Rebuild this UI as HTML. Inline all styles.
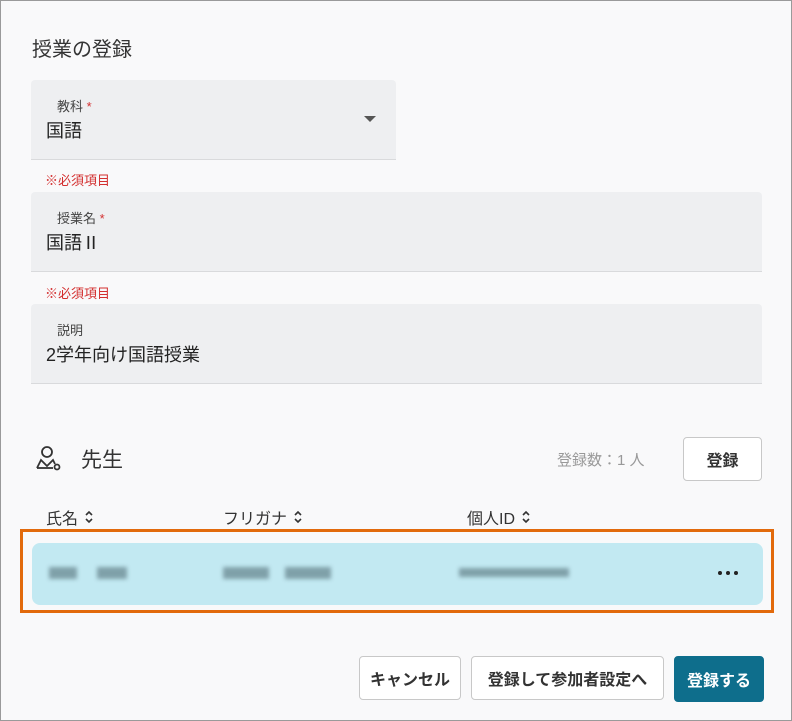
<!DOCTYPE html><html><head><meta charset="utf-8"><style>
body{margin:0;width:792px;height:721px;overflow:hidden;background:#fff;font-family:"Liberation Sans","Noto Sans CJK JP",sans-serif;}
.d{position:absolute;left:0;top:0;width:790px;height:719px;border:1px solid #9a9a9a;background:#f9f9fa;}
.a{position:absolute;}
.f{position:absolute;background:#eeeff1;border-bottom:1px solid #d9dadc;border-radius:4px 4px 0 0;}
.lb{position:absolute;left:26px;top:16px;font-size:13px;color:#444;}
.v{position:absolute;left:15px;font-size:18px;color:#222;}
.req{color:#d32f2f;font-size:13px;}
.btn{position:absolute;border:1px solid #c8c8c8;border-radius:4px;background:#fff;font-size:16px;color:#333;display:flex;align-items:center;justify-content:center;font-weight:bold;}
.th{position:absolute;top:504px;font-size:16px;color:#333;display:flex;align-items:center;gap:6px}
.blur{position:absolute;height:12px;background:#6f8e97;filter:blur(2px);opacity:.8}
</style></head><body><div class="d">
<div class="a" style="left:31px;top:32px;font-size:20px;color:#333">授業の登録</div>
<div class="f" style="left:30px;top:79px;width:365px;height:79px"><div class="lb">教科 <span class="req">*</span></div><div class="v" style="top:37px">国語</div>
<div class="a" style="left:333px;top:36px;width:0;height:0;border-left:6px solid transparent;border-right:6px solid transparent;border-top:6px solid #555"></div></div>
<div class="a req" style="left:44px;top:169px">※必須項目</div>
<div class="f" style="left:30px;top:191px;width:731px;height:79px"><div class="lb">授業名 <span class="req">*</span></div><div class="v" style="top:37px">国語Ⅱ</div></div>
<div class="a req" style="left:44px;top:282px">※必須項目</div>
<div class="f" style="left:30px;top:303px;width:731px;height:79px"><div class="lb">説明</div><div class="v" style="top:37px">2学年向け国語授業</div></div>
<svg class="a" style="left:33px;top:443px" width="28" height="28" viewBox="0 0 28 28" fill="none" stroke="#333" stroke-width="1.8"><circle cx="13" cy="8" r="5"/><path d="M3 24 L7 16 L13 22 L19 16 L21 20"/><path d="M3 24 H19"/><circle cx="23" cy="23" r="2.5"/></svg>
<div class="a" style="left:80px;top:443px;font-size:21px;color:#333">先生</div>
<div class="a" style="left:556px;top:448px;font-size:15px;color:#999">登録数：1 人</div>
<div class="btn" style="left:682px;top:436px;width:77px;height:42px">登録</div>
<div class="th" style="left:45px">氏名 <svg width="10" height="16" viewBox="0 0 10 16" fill="none" stroke="#333" stroke-width="1.6"><path d="M2 6 L5 3 L8 6 M2 10 L5 13 L8 10"/></svg></div>
<div class="th" style="left:222px">フリガナ <svg width="10" height="16" viewBox="0 0 10 16" fill="none" stroke="#333" stroke-width="1.6"><path d="M2 6 L5 3 L8 6 M2 10 L5 13 L8 10"/></svg></div>
<div class="th" style="left:466px">個人ID <svg width="10" height="16" viewBox="0 0 10 16" fill="none" stroke="#333" stroke-width="1.6"><path d="M2 6 L5 3 L8 6 M2 10 L5 13 L8 10"/></svg></div>
<div class="a" style="left:19px;top:528px;width:748px;height:78px;border:3px solid #e26a0c"></div>
<div class="a" style="left:31px;top:542px;width:731px;height:62px;background:#c2e9f2;border-radius:8px"></div>
<div class="blur" style="left:48px;top:566px;width:28px"></div><div class="blur" style="left:96px;top:566px;width:30px"></div>
<div class="blur" style="left:222px;top:566px;width:46px"></div><div class="blur" style="left:284px;top:566px;width:46px"></div>
<div class="blur" style="left:458px;top:567px;width:110px;height:9px"></div>
<svg class="a" style="left:716px;top:569px" width="22" height="6"><circle cx="3" cy="3" r="2" fill="#222"/><circle cx="11" cy="3" r="2" fill="#222"/><circle cx="19" cy="3" r="2" fill="#222"/></svg>
<div class="btn" style="left:358px;top:655px;width:100px;height:42px">キャンセル</div>
<div class="btn" style="left:470px;top:655px;width:191px;height:42px">登録して参加者設定へ</div>
<div class="btn" style="left:673px;top:655px;width:88px;height:44px;background:#0e6e8c;border-color:#0e6e8c;color:#fff">登録する</div>
</div></body></html>
